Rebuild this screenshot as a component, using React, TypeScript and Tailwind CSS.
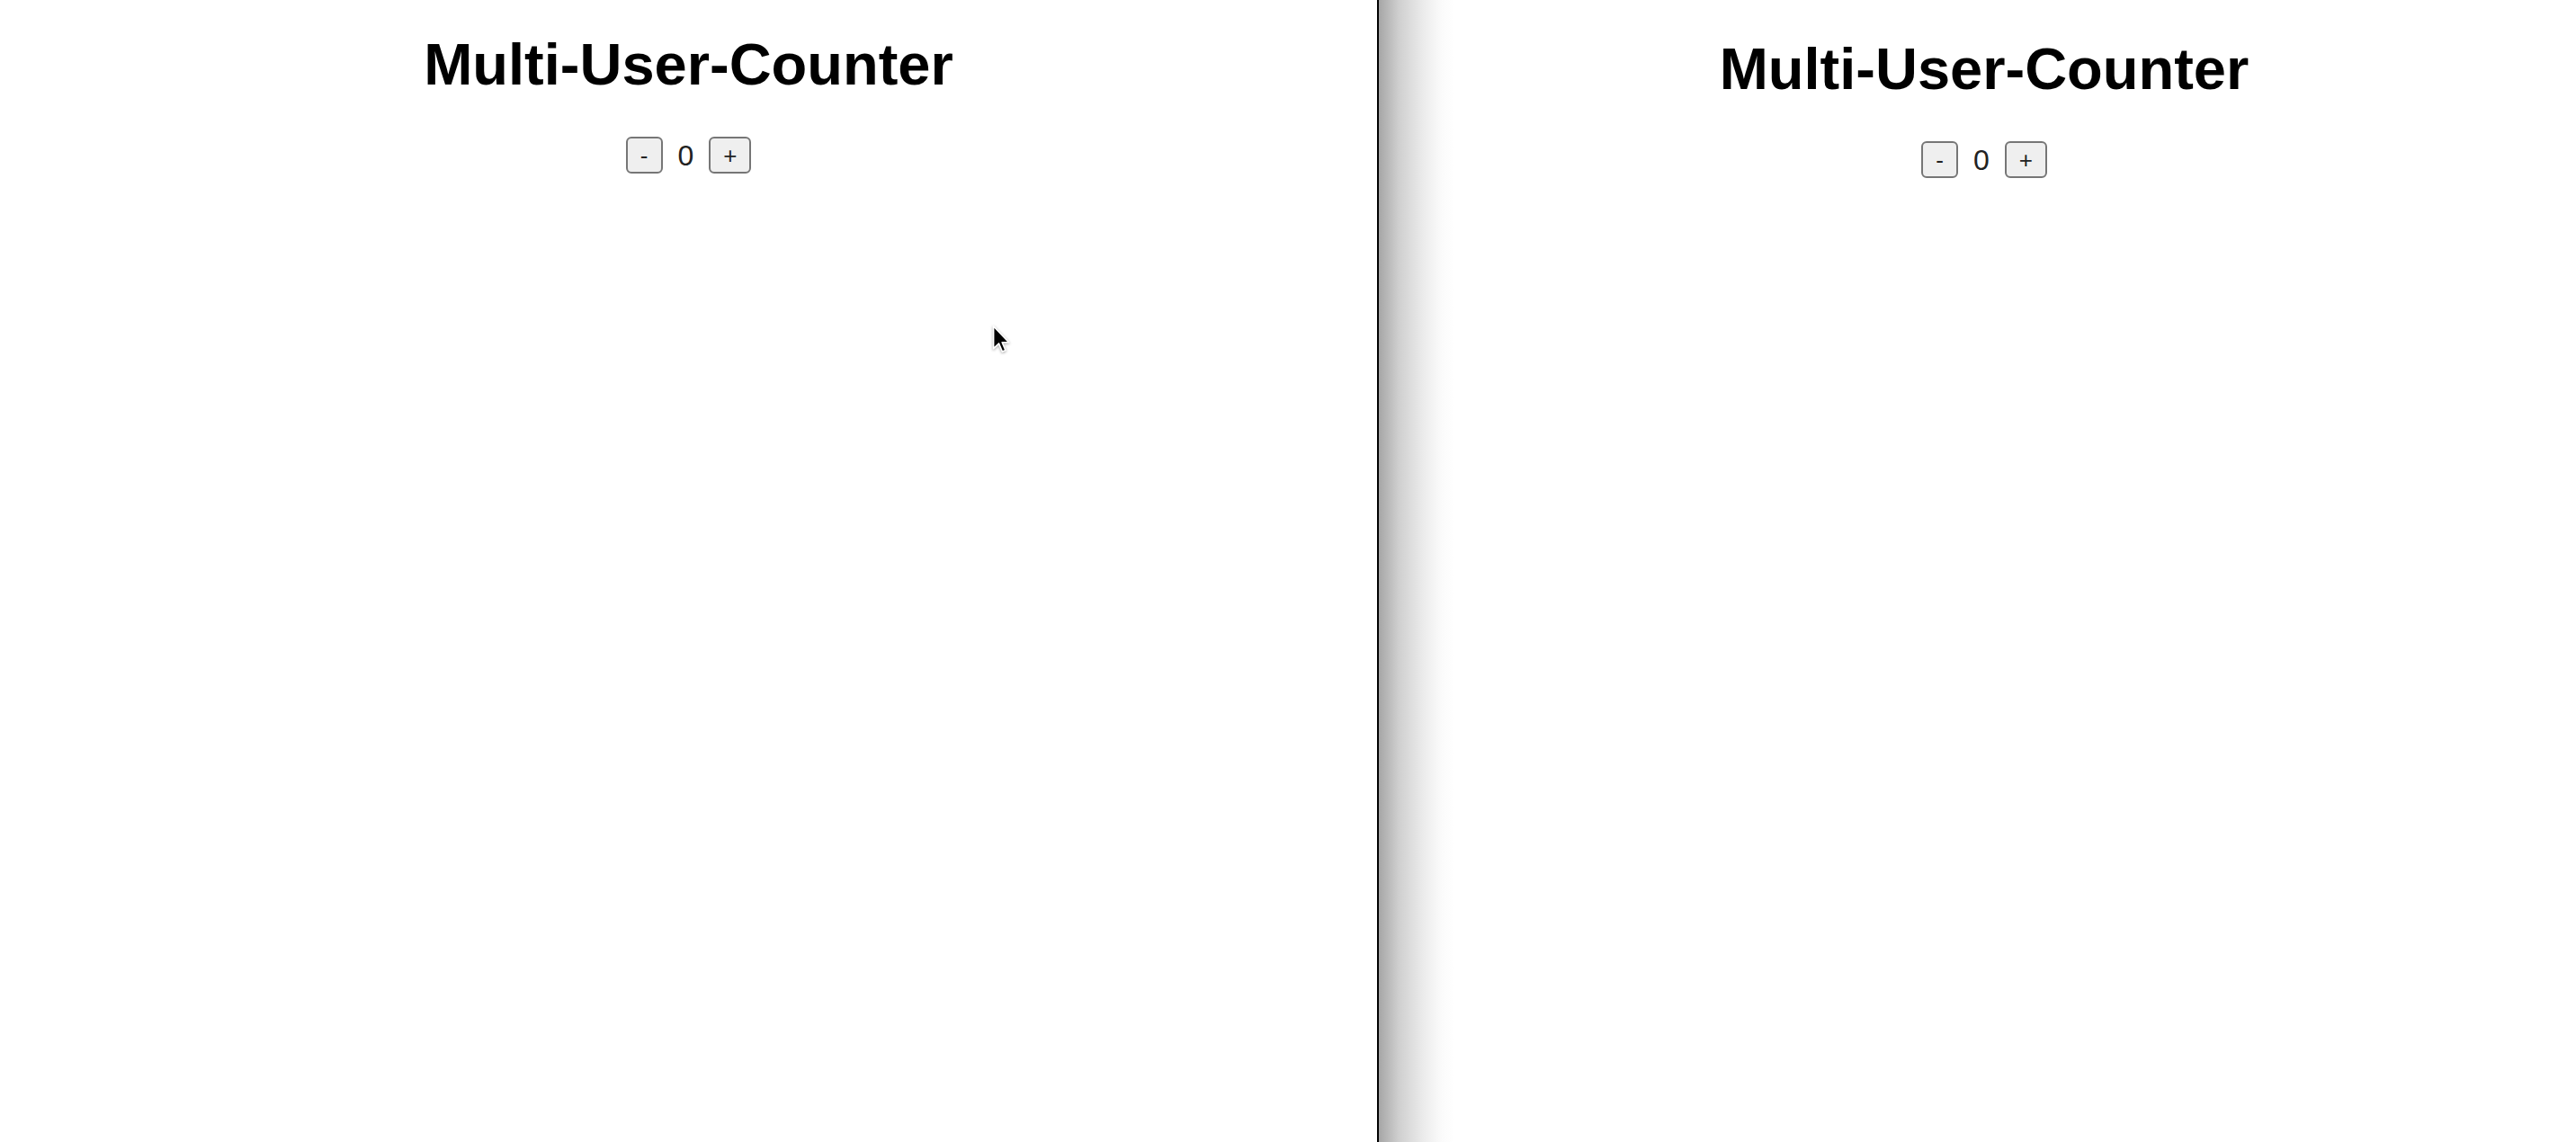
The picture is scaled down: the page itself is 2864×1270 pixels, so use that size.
function Counter() {
  return (
    <>
      <h1 className="text-[65px] font-bold leading-none text-black">Multi-User-Counter</h1>
      <div className="mt-[48px] flex items-center gap-[17px]">
        <button className="flex h-[41px] w-[41px] items-center justify-center rounded-[6px] border-2 border-[#767676] bg-[#efefef] text-[26px] leading-none text-[#222]">
          -
        </button>
        <span className="text-[32px] leading-none text-[#222]">0</span>
        <button className="flex h-[41px] w-[47px] items-center justify-center rounded-[6px] border-2 border-[#767676] bg-[#efefef] text-[26px] leading-none text-[#222]">
          +
        </button>
      </div>
    </>
  );
}

function Cursor() {
  return (
    <svg
      className="absolute left-[1103px] top-[361px] drop-shadow-[0_1px_1.5px_rgba(0,0,0,0.35)]"
      width="21"
      height="33"
      viewBox="0 0 13.5 21"
    >
      <path
        d="M1 1 V17 L4.8 13.4 L7.3 19.2 L9.6 18.2 L7.2 12.6 H12 Z"
        fill="#000"
        stroke="#fff"
        strokeWidth="1.1"
        strokeLinejoin="round"
      />
    </svg>
  );
}

export default function App() {
  return (
    <div className="flex h-[1270px] w-[2864px] overflow-hidden bg-white font-['Liberation_Sans',Arial,sans-serif]">
      <div className="relative flex w-[1531px] shrink-0 flex-col items-center pt-[39px]">
        <Counter />
        <Cursor />
      </div>
      <div className="w-[2px] shrink-0 bg-black" />
      <div className="flex flex-1 flex-col items-center bg-[linear-gradient(to_right,#a6a6a6,#cfcfcf_22px,#ececec_50px,#fbfbfb_70px,#fff_84px)] pl-[15px] pt-[44px]">
        <Counter />
      </div>
    </div>
  );
}
